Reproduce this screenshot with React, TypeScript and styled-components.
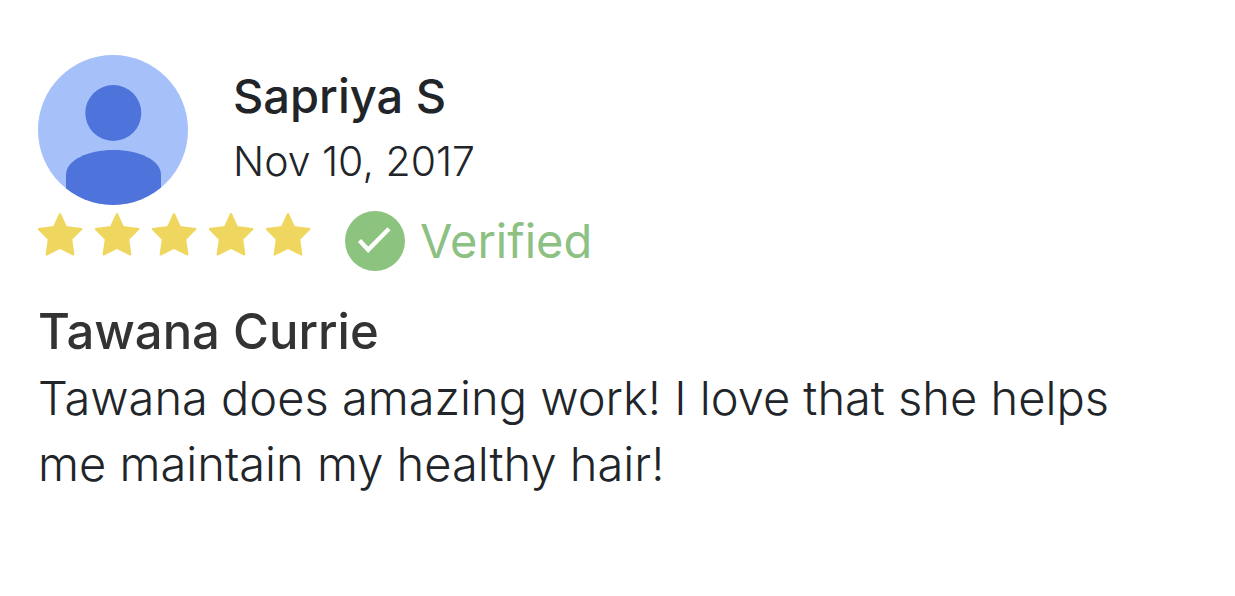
import React from "react";
import styled, { createGlobalStyle } from "styled-components";

const GlobalStyle = createGlobalStyle`
  *, *::before, *::after { box-sizing: border-box; }
  body {
    margin: 0;
    background: #ffffff;
    color: #212529;
    font-family: Inter, sans-serif;
    font-weight: 300;
  }
`;

const Review = styled.article`
  padding: 55px 76px 40px 38px;
`;

const Author = styled.header`
  display: flex;
  align-items: center;
  gap: 45px;
`;

const Avatar = styled.svg`
  display: block;
  width: 150px;
  height: 150px;
  flex: none;
`;

const AuthorName = styled.h2`
  margin: 0;
  font-size: 47px;
  line-height: 62px;
  font-weight: 500;
`;

const ReviewDate = styled.time`
  display: block;
  font-size: 41px;
  line-height: 68px;
`;

const Rating = styled.div`
  display: flex;
  align-items: center;
  gap: 34px;
  height: 72px;
`;

const Stars = styled.div`
  display: flex;
  gap: 12px;
  margin-bottom: 14px;
`;

const Star = styled.svg`
  display: block;
  width: 45px;
  height: 44px;
  fill: #efd75f;
  stroke: #efd75f;
`;

const Verified = styled.div`
  display: flex;
  align-items: center;
  gap: 15px;
  color: #8cc183;
  font-size: 47px;
  line-height: 60px;
  font-weight: 400;
`;

const CheckBadge = styled.svg`
  display: block;
  width: 60px;
  height: 60px;
`;

const Title = styled.h3`
  margin: 22px 0 0;
  color: #333333;
  font-size: 49px;
  line-height: 66px;
  font-weight: 500;
`;

const Body = styled.p`
  margin: 0;
  font-size: 47px;
  line-height: 66px;
`;

const stars = [1, 2, 3, 4, 5];

export default function App() {
  return (
    <>
      <GlobalStyle />
      <Review>
        <Author>
          <Avatar viewBox="0 0 150 150" aria-hidden="true">
            <defs>
              <clipPath id="avatar-circle">
                <circle cx="75" cy="75" r="75" />
              </clipPath>
            </defs>
            <g clipPath="url(#avatar-circle)">
              <rect width="150" height="150" fill="#a6c0fa" />
              <circle cx="75.3" cy="58" r="28" fill="#4e73da" />
              <path d="M28 150V120C28 105 50 95 75.5 95S123 105 123 120V150Z" fill="#4e73da" />
            </g>
          </Avatar>
          <div>
            <AuthorName>Sapriya S</AuthorName>
            <ReviewDate dateTime="2017-11-10">Nov 10, 2017</ReviewDate>
          </div>
        </Author>
        <Rating>
          <Stars role="img" aria-label="5 out of 5 stars">
            {stars.map((n) => (
              <Star key={n} viewBox="0 0 45 44">
                <path
                  d="M22 2L28 15L43.4 17L33.2 27.2L35.4 42.5L22 35.9L8.6 42.5L10.8 27.2L0.7 17L16 15Z"
                  strokeWidth="2"
                  strokeLinejoin="round"
                />
              </Star>
            ))}
          </Stars>
          <Verified>
            <CheckBadge viewBox="0 0 60 60" aria-hidden="true">
              <circle cx="30" cy="30" r="30" fill="#8cc47f" />
              <path d="M14.5 29.5L23.2 38.8L44 17.8" fill="none" stroke="#ffffff" strokeWidth="4.4" />
            </CheckBadge>
            <span>Verified</span>
          </Verified>
        </Rating>
        <Title>Tawana Currie</Title>
        <Body>Tawana does amazing work! I love that she helps me maintain my healthy hair!</Body>
      </Review>
    </>
  );
}
